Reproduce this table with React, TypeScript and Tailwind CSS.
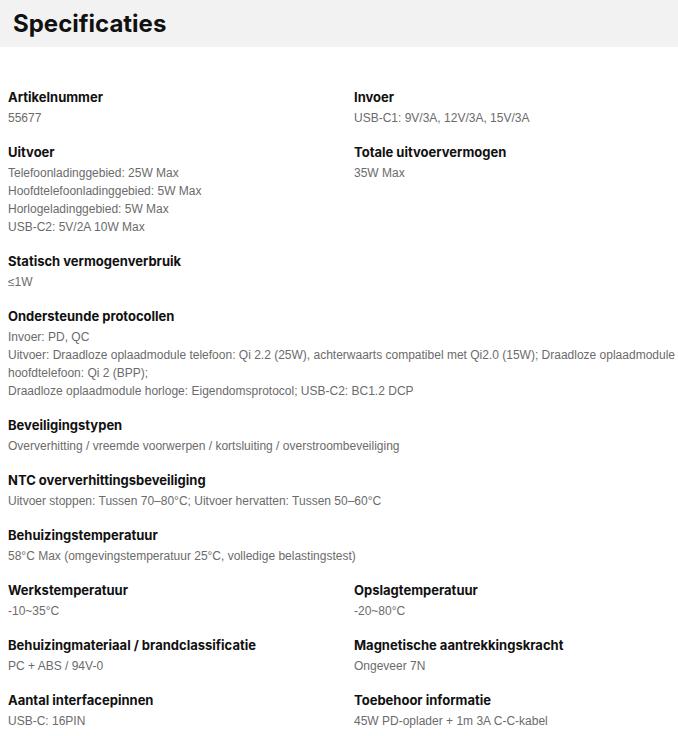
import React from "react";

type Spec = { label: string; lines: string[]; full?: boolean };

const specs: Spec[] = [
  { label: "Artikelnummer", lines: ["55677"] },
  { label: "Invoer", lines: ["USB-C1: 9V/3A, 12V/3A, 15V/3A"] },
  {
    label: "Uitvoer",
    lines: [
      "Telefoonladinggebied: 25W Max",
      "Hoofdtelefoonladinggebied: 5W Max",
      "Horlogeladinggebied: 5W Max",
      "USB-C2: 5V/2A 10W Max",
    ],
  },
  { label: "Totale uitvoervermogen", lines: ["35W Max"] },
  { label: "Statisch vermogenverbruik", lines: ["≤1W"], full: true },
  {
    label: "Ondersteunde protocollen",
    lines: [
      "Invoer: PD, QC",
      "Uitvoer: Draadloze oplaadmodule telefoon: Qi 2.2 (25W), achterwaarts compatibel met Qi2.0 (15W); Draadloze oplaadmodule hoofdtelefoon: Qi 2 (BPP);",
      "Draadloze oplaadmodule horloge: Eigendomsprotocol; USB-C2: BC1.2 DCP",
    ],
    full: true,
  },
  {
    label: "Beveiligingstypen",
    lines: ["Oververhitting / vreemde voorwerpen / kortsluiting / overstroombeveiliging"],
    full: true,
  },
  {
    label: "NTC oververhittingsbeveiliging",
    lines: ["Uitvoer stoppen: Tussen 70–80°C; Uitvoer hervatten: Tussen 50–60°C"],
    full: true,
  },
  {
    label: "Behuizingstemperatuur",
    lines: ["58°C Max (omgevingstemperatuur 25°C, volledige belastingstest)"],
    full: true,
  },
  { label: "Werkstemperatuur", lines: ["-10~35°C"] },
  { label: "Opslagtemperatuur", lines: ["-20~80°C"] },
  { label: "Behuizingmateriaal / brandclassificatie", lines: ["PC + ABS / 94V-0"] },
  { label: "Magnetische aantrekkingskracht", lines: ["Ongeveer 7N"] },
  { label: "Aantal interfacepinnen", lines: ["USB-C: 16PIN"] },
  { label: "Toebehoor informatie", lines: ["45W PD-oplader + 1m 3A C-C-kabel"] },
];

const headFont = { fontFamily: "Inter, 'Noto Sans', sans-serif" };

export default function App() {
  return (
    <div className="min-h-screen bg-white">
      <div className="h-[47px] bg-[#f2f2f2] pl-[13px] flex items-center">
        <h1
          className="text-[24px] font-bold text-[#111] leading-none"
          style={headFont}
        >
          Specificaties
        </h1>
      </div>

      <div className="grid grid-cols-[346px_1fr] gap-y-[14px] pl-2 pt-[39px] pb-6">
        {specs.map((s) => (
          <div key={s.label} className={s.full ? "col-span-2" : ""}>
            <h3
              className="text-[13px] font-bold leading-[22px] text-[#111]"
              style={headFont}
            >
              {s.label}
            </h3>
            <div className="pt-[1px] text-[12px] leading-[18px] text-[#6b6b6b] font-['Liberation_Sans',Arial,sans-serif]">
              {s.lines.map((l) => (
                <p key={l}>{l}</p>
              ))}
            </div>
          </div>
        ))}
      </div>
    </div>
  );
}
